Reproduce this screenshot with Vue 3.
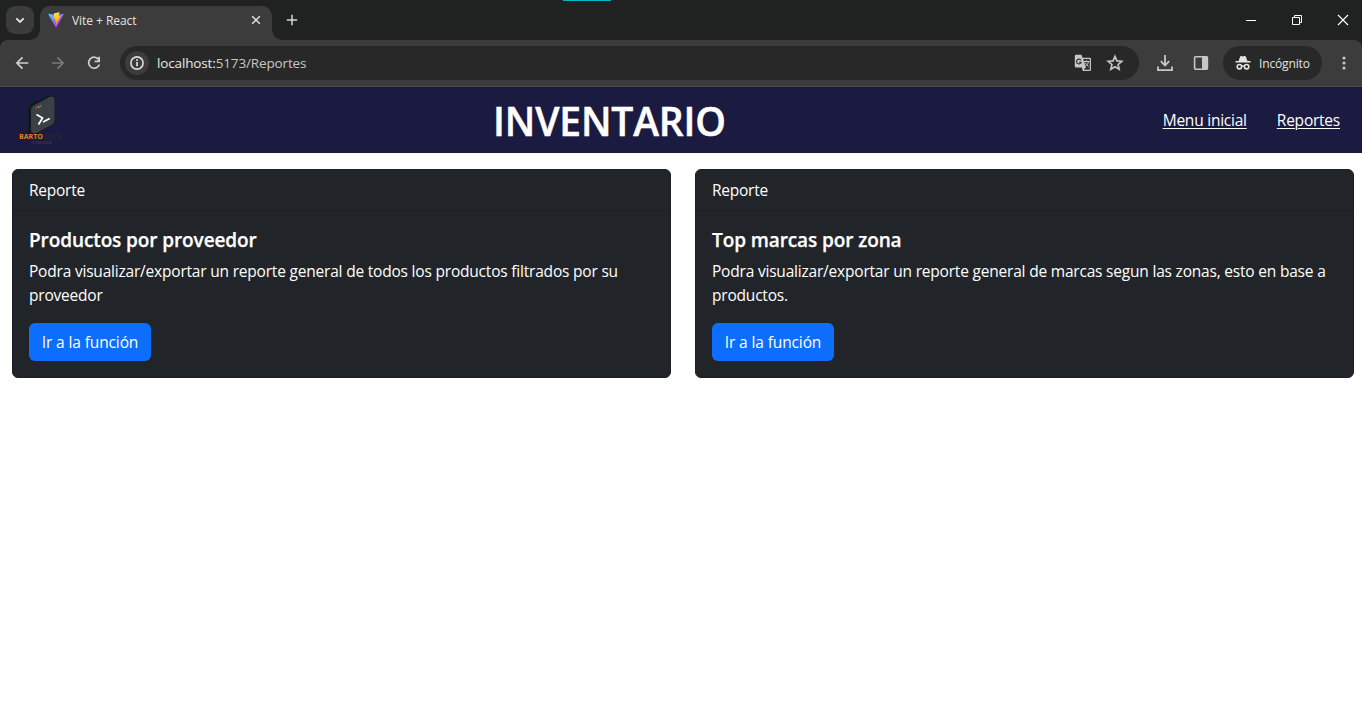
<script setup>
const cards = [
  {
    title: 'Productos por proveedor',
    lines: ['Podra visualizar/exportar un reporte general de todos los productos filtrados por su', 'proveedor'],
  },
  {
    title: 'Top marcas por zona',
    lines: ['Podra visualizar/exportar un reporte general de marcas segun las zonas, esto en base a', 'productos.'],
  },
]
</script>

<template>
  <div class="window">
    <div class="tabstrip">
      <div class="accent"></div>
      <div class="tabsearch">
        <svg width="28" height="28" viewBox="0 0 28 28"><path d="M10.3 12.3l3.7 3.7 3.7-3.7" fill="none" stroke="#e3e3e3" stroke-width="1.9" /></svg>
      </div>
      <div class="tab">
        <svg class="favicon" width="16" height="16" viewBox="0 0 410 404">
          <defs>
            <linearGradient id="va" x1="6" y1="33" x2="235" y2="344" gradientUnits="userSpaceOnUse"><stop stop-color="#41d1ff" /><stop offset="1" stop-color="#bd34fe" /></linearGradient>
            <linearGradient id="vb" x1="194" y1="9" x2="236" y2="293" gradientUnits="userSpaceOnUse"><stop stop-color="#ffea83" /><stop offset=".08" stop-color="#ffdd35" /><stop offset="1" stop-color="#ffa800" /></linearGradient>
          </defs>
          <path d="M400 59L216 388c-4 7-15 7-19 0L10 59c-4-7 2-16 11-15l184 33 180-33c9-1 19 8 15 15z" fill="url(#va)" />
          <path d="M293 1L157 28c-2 0-4 2-4 5l-9 141c0 3 3 6 7 5l38-9c3-1 7 2 6 6l-11 55c-1 4 2 7 6 6l23-7c4-1 7 2 6 6l-18 87c-1 5 6 8 9 4l2-3 111-222c2-4-1-8-6-7l-39 8c-4 0-7-3-6-7l26-88c1-4-2-8-5-7z" fill="url(#vb)" />
        </svg>
        <span class="tabtitle">Vite + React</span>
        <svg class="close" width="10" height="10" viewBox="0 0 10 10"><path d="M1.2 1.2l7.6 7.6M8.8 1.2L1.2 8.8" stroke="#e3e3e3" stroke-width="1.5" /></svg>
      </div>
      <svg class="plus" width="12" height="12" viewBox="0 0 12 12"><path d="M6 .8v10.4M.8 6h10.4" stroke="#d5d5d5" stroke-width="1.5" /></svg>
      <div class="controls">
        <svg width="46" height="40" viewBox="0 0 46 40"><path d="M18 20.5h10" stroke="#fff" /></svg>
        <svg width="46" height="40" viewBox="0 0 46 40"><path d="M18.500 17.500h7v7h-7zM20.500 17.500v-2h7v7h-2" fill="none" stroke="#fff" /></svg>
        <svg width="46" height="40" viewBox="0 0 46 40"><path d="M18 15l10 10M28 15l-10 10" stroke="#fff" stroke-width="1.1" /></svg>
      </div>
    </div>

    <div class="toolbar-wrap">
      <div class="toolbar">
        <svg class="nav-icon" width="36" height="36" viewBox="0 0 36 36"><path d="M24.300 18H13M18.500 12.400L12.900 18l5.600 5.600" fill="none" stroke="#d0d0d0" stroke-width="1.700" /></svg>
        <svg class="nav-icon" width="36" height="36" viewBox="0 0 36 36"><path d="M11.700 18H23M17.500 12.400l5.600 5.600-5.600 5.600" fill="none" stroke="#787878" stroke-width="1.700" /></svg>
        <svg class="nav-icon" width="36" height="36" viewBox="0 0 36 36"><path d="M22.800 14.700A5.500 5.500 0 1 0 23.400 19.500" fill="none" stroke="#d0d0d0" stroke-width="1.700" /><path d="M24 11.800v5.400h-5.400v-1.700h3.700v-3.700z" fill="#d0d0d0" /></svg>
        <div class="omnibox">
          <div class="info">
            <svg width="24" height="24" viewBox="0 0 24 24"><circle cx="12" cy="12" r="6.100" fill="none" stroke="#dedede" stroke-width="1.600" /><path d="M12 11v4.200M12 8.300v1.700" stroke="#dedede" stroke-width="1.700" /></svg>
          </div>
          <span class="url"><b>localhost:</b>5173/Reportes</span>
          <svg class="translate" width="18" height="18" viewBox="0 0 18 18">
            <path d="M2 .800h5.500l1 3h7.300a1.200 1.200 0 0 1 1.200 1.200v10.800a1.200 1.200 0 0 1-1.200 1.200H8.800l-1-3.500H2A1.200 1.200 0 0 1 .800 12.300V2A1.200 1.200 0 0 1 2 .800z" fill="#c7c7c7" />
            <path d="M9.200 5h6.600v10.800H9.800l2-2.500z" fill="#333" />
            <path d="M6.900 6.100A2.400 2.400 0 1 0 7.200 8.300H5" fill="none" stroke="#333" stroke-width="1.100" />
            <path d="M10 7.500h5.300M12.600 6.300v1.200M14.500 7.700c-.400 2-1.700 3.500-3.300 4.500M11.200 8.500c.700 1.700 2 3 3.400 4" fill="none" stroke="#c7c7c7" stroke-width="1" />
          </svg>
          <svg class="star" width="18" height="18" viewBox="0 0 18 18"><path d="M9 2.400l1.900 4.500 4.900.400-3.700 3.200 1.100 4.800L9 12.700l-4.200 2.600 1.100-4.800-3.700-3.200 4.900-.4z" fill="none" stroke="#c7c7c7" stroke-width="1.650" /></svg>
        </div>
        <svg class="download" width="18" height="18" viewBox="0 0 18 18"><path d="M9 1v10M4.800 7.200L9 11.400l4.200-4.200M2 12.500v3.700h14v-3.700" fill="none" stroke="#c7c7c7" stroke-width="1.800" /></svg>
        <svg class="panel" width="16" height="16" viewBox="0 0 16 16"><rect x="1.600" y="1.800" width="12.800" height="12.400" rx="1" fill="none" stroke="#c7c7c7" stroke-width="1.600" /><path d="M9 1.500h5.500v13H9z" fill="#c7c7c7" /></svg>
        <div class="incognito">
          <svg width="16" height="16" viewBox="0 0 16 16"><path d="M3.600 6l1.500-4.200c.2-.6.8-.9 1.400-.700L8 1.600l1.500-.500c.6-.2 1.200.1 1.400.7L12.400 6h3.100v1.500H.500V6z" fill="#e3e3e3" /><circle cx="4.400" cy="11.700" r="2.200" fill="none" stroke="#e3e3e3" stroke-width="1.600" /><circle cx="11.600" cy="11.700" r="2.200" fill="none" stroke="#e3e3e3" stroke-width="1.600" /><path d="M6.500 11.400q1.500-.900 3 0" fill="none" stroke="#e3e3e3" stroke-width="1.300" /></svg>
          <span>Incógnito</span>
        </div>
        <svg class="dots" width="4" height="16" viewBox="0 0 4 16"><circle cx="2" cy="3" r="1.550" fill="#c7c7c7" /><circle cx="2" cy="8" r="1.550" fill="#c7c7c7" /><circle cx="2" cy="13" r="1.550" fill="#c7c7c7" /></svg>
      </div>
    </div>

    <header class="navbar">
      <svg class="logo" width="54" height="58" viewBox="0 0 54 58">
        <path d="M14 19.500q0-3.500 3-5.200L33 6q6-2.500 8 2.500v22q0 3-3 4.500L21 44.500q-6 1.500-7-3.500z" fill="#101820" />
        <path d="M17 20.500q0-3.800 3.500-5.500L35.500 7q5-1.800 5 3.300V30q0 3.500-3 5L22.500 43q-5.500 1.800-5.500-3.500z" fill="#3a4045" />
        <circle cx="22.500" cy="18" r=".9" fill="#c8413f" /><circle cx="24.600" cy="17" r=".9" fill="#c99a32" /><circle cx="26.800" cy="15.900" r=".9" fill="#2c9a73" />
        <path d="M22.500 24.500l6 3.500-4 6.500M29 32l6.700-3.400" fill="none" stroke="#fff" stroke-width="1.700" />
        <text x="5" y="49" class="brand" textLength="24" lengthAdjust="spacingAndGlyphs" fill="#d98714">BARTO</text>
        <text x="29.500" y="49" class="brand" textLength="19" lengthAdjust="spacingAndGlyphs" fill="#25263a">CODE</text>
        <text x="17" y="54" class="sub" textLength="20">TECNOLOGIA</text>
      </svg>
      <h1>INVENTARIO</h1>
      <nav><a class="home">Menu inicial</a><a class="reports">Reportes</a></nav>
    </header>

    <main>
      <section v-for="card in cards" :key="card.title" class="card">
        <div class="card-header">Reporte</div>
        <div class="card-body">
          <h5>{{ card.title }}</h5>
          <p><template v-for="(line, i) in card.lines" :key="line"><br v-if="i" />{{ line }}</template></p>
          <button>Ir a la función</button>
        </div>
      </section>
    </main>
  </div>
</template>

<style>
body { margin: 0; background: #fff; }
</style>

<style scoped>
* { box-sizing: border-box; }
svg { display: block; flex: none; }
.window { width: 1362px; height: 726px; overflow: hidden; background: #fff; font-family: "Open Sans", "Noto Sans", sans-serif; color: #fff; }
.tabstrip { position: relative; height: 40px; background: #202221; display: flex; align-items: center; padding-left: 6px; }
.accent { position: absolute; left: 563px; top: 0; width: 48px; height: 1px; background: #00b7c3; }
.tabsearch { width: 28px; height: 28px; border-radius: 9px; background: #3b3b3b; }
.tab { position: relative; align-self: flex-end; width: 232px; height: 34px; margin-left: 6px; padding: 0 11px 6px 8px; display: flex; align-items: center; background: #3c3c3c; border-radius: 10px 10px 0 0; }
.tab::before, .tab::after { content: ""; position: absolute; bottom: 0; width: 10px; height: 10px; }
.tab::before { left: -10px; background: radial-gradient(circle at 0 0, transparent 9.5px, #3c3c3c 10px); }
.tab::after { right: -10px; background: radial-gradient(circle at 100% 0, transparent 9.5px, #3c3c3c 10px); }
.tabtitle { margin-left: 8px; font-size: 12px; color: #e3e3e3; white-space: nowrap; letter-spacing: -.05px; }
.close { margin-left: auto; }
.plus { margin-left: 14px; }
.controls { margin-left: auto; display: flex; margin-right: -4px; }
.toolbar-wrap { background: #202221; }
.toolbar { height: 47px; background: #3c3c3c; border-bottom: 1px solid #4a4a4a; border-radius: 8px 8px 0 0; display: flex; align-items: center; padding-left: 4px; }
.omnibox { width: 1019px; height: 34px; margin-left: 8px; border-radius: 17px; background: #282828; display: flex; align-items: center; padding: 0 15px 0 5px; }
.info { width: 24px; height: 24px; border-radius: 50%; background: #3c3c3c; }
.url { margin-left: 8px; font-size: 13.500px; letter-spacing: -.14px; color: #c7c7c7; white-space: nowrap; }
.url b { font-weight: 400; color: #e8e8e8; }
.translate { margin-left: auto; }
.star { margin-left: 14px; }
.download { margin-left: 17px; }
.panel { margin-left: 19px; }
.incognito { margin-left: 14px; width: 99px; height: 34px; border-radius: 17px; background: #282828; display: flex; align-items: center; padding-left: 12px; font-size: 12px; letter-spacing: -.15px; color: #e3e3e3; }
.incognito span { margin-left: 8px; }
.dots { margin-left: 20px; }
.navbar { height: 66px; background: #1b1a40; display: flex; align-items: flex-start; }
.logo { margin: 3px 0 0 14px; }
.brand { font: 700 6.800px "Open Sans", sans-serif; }
.sub { font: 600 2.800px "Open Sans", sans-serif; fill: #42435a; }
h1 { margin: 10px 0 0 425px; font-size: 39px; line-height: 48px; font-weight: 600; letter-spacing: -.15px; -webkit-text-stroke: .5px #fff; width: 240px; white-space: nowrap; }
nav { margin: 21px 22px 0 auto; display: flex; gap: 30px; font-size: 15.500px; line-height: 24px; letter-spacing: -.23px; }
nav a { text-decoration: underline; text-underline-offset: 2px; text-decoration-thickness: 1px; white-space: nowrap; }
main { display: flex; gap: 24px; padding: 16px 8px 0 12px; }
.card { flex: 1 1 0; min-width: 0; height: 209px; border-radius: 6px; background: #212529; border: 1px solid #1c1f23; font-size: 15.500px; line-height: 24px; letter-spacing: -.25px; }
.card-header { height: 41px; padding: 8px 16px; border-bottom: 1px solid #1c1f23; }
.card-body { padding: 16px; }
h5 { margin: 0 0 8px; padding-top: 1px; font-size: 19px; line-height: 24px; height: 24px; font-weight: 600; letter-spacing: -.1px; -webkit-text-stroke: .25px #fff; }
p { margin: 0 0 16px; white-space: nowrap; letter-spacing: -.2px; }
button { display: block; width: 122px; height: 38px; padding: 0; border: 0; border-radius: 6px; background: #0d6efd; color: #fff; font: 15.500px/24px "Open Sans", "Noto Sans", sans-serif; letter-spacing: -.12px; }
</style>
